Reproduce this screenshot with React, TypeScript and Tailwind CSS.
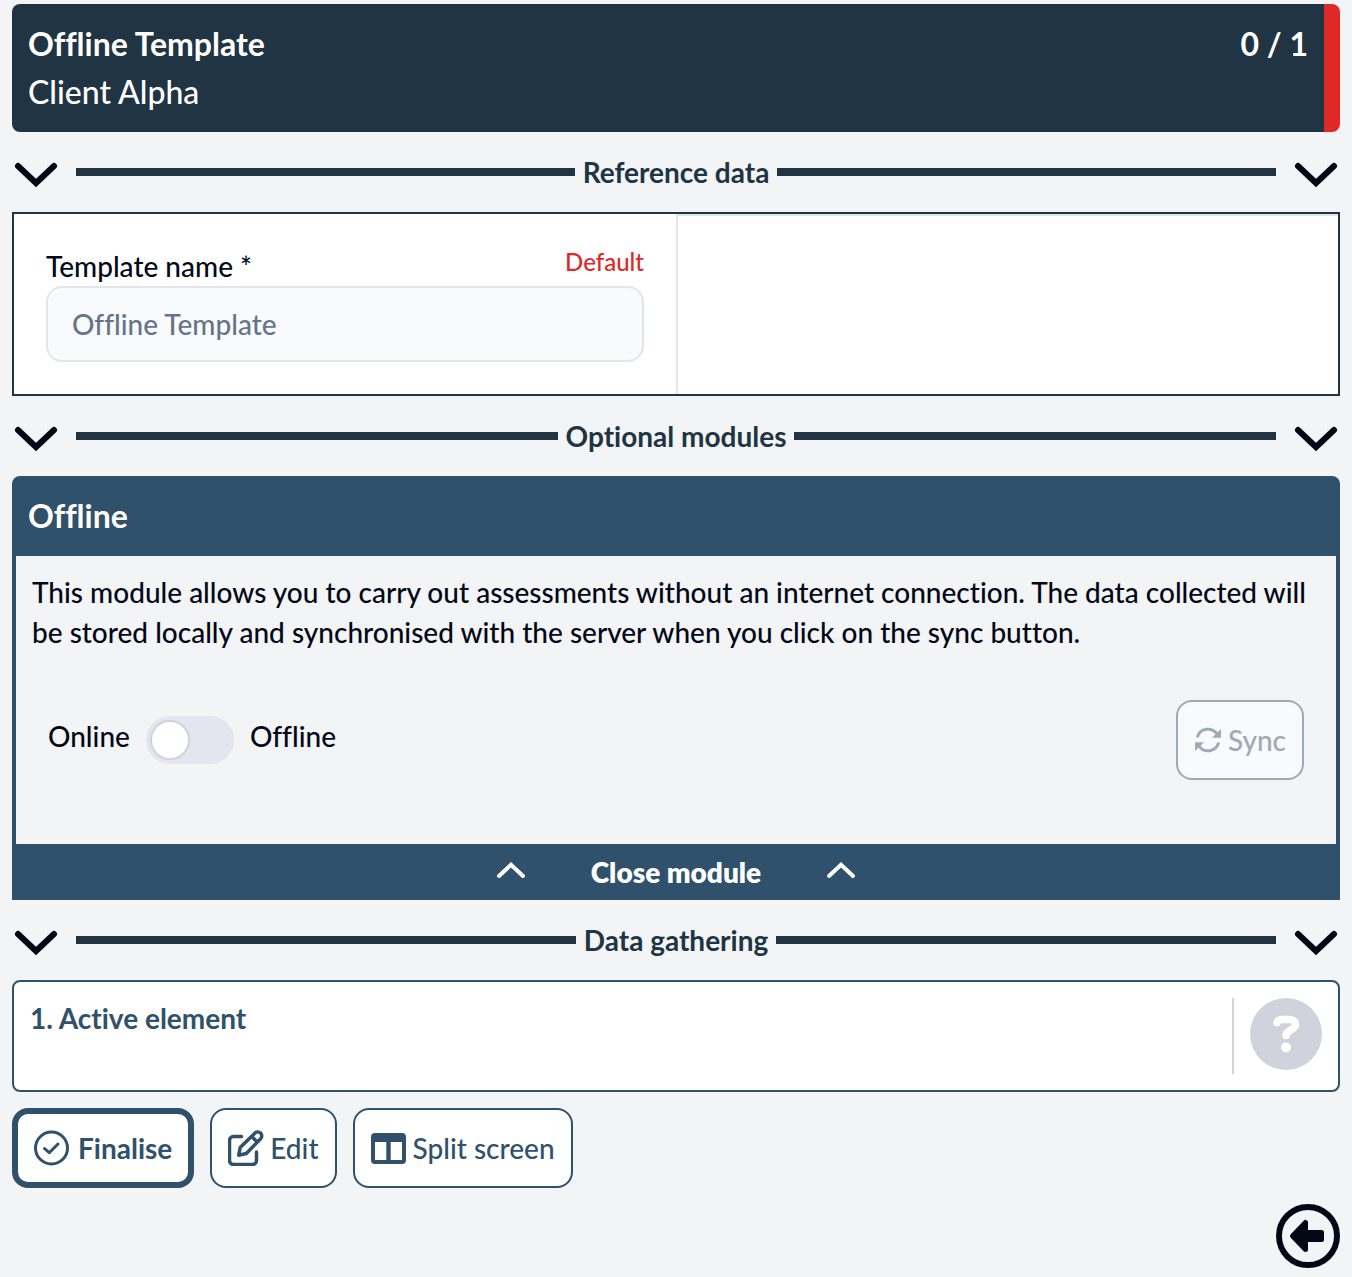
import { useState, type ReactNode } from 'react';

function ChevronDown() {
  return (
    <svg viewBox="0 0 48 48" className="size-12" fill="none" stroke="currentColor" strokeWidth="6" strokeLinecap="round" aria-hidden="true">
      <path d="M6 18 24 35 42 18" />
    </svg>
  );
}

function ChevronUp() {
  return (
    <svg viewBox="0 0 32 32" className="size-8" fill="none" stroke="currentColor" strokeWidth="4" strokeLinecap="round" aria-hidden="true">
      <path d="M4 20 16 8.800 28 20" />
    </svg>
  );
}

function SyncIcon() {
  return (
    <svg viewBox="0 0 28 28" className="size-7" fill="none" stroke="currentColor" strokeWidth="3" aria-hidden="true">
      <path d="M3.300 11.300A11 11 0 0 1 23 8M24.700 16.700A11 11 0 0 1 5 20" />
      <path d="M27 3v8.700h-9zM1 25v-8.700h9z" fill="currentColor" stroke="none" />
    </svg>
  );
}

function CheckCircleIcon() {
  return (
    <svg viewBox="0 0 36 36" className="size-9" fill="none" stroke="currentColor" strokeWidth="3" strokeLinecap="round" strokeLinejoin="round" aria-hidden="true">
      <circle cx="17.500" cy="18" r="16" />
      <path d="m10.500 18.500 4.700 4.200 8.800-8.700" />
    </svg>
  );
}

function EditIcon() {
  return (
    <svg viewBox="0 0 36 36" className="size-9" fill="none" stroke="currentColor" strokeWidth="3.500" strokeLinecap="round" strokeLinejoin="round" aria-hidden="true">
      <path d="M13.500 6.500H5.500a4 4 0 0 0-4 4v20a4 4 0 0 0 4 4h19a4 4 0 0 0 4-4v-8.500" />
      <path d="M10.700 25.200l1.500-7.700L26.800 3.200a4 4 0 0 1 5.800 5.600L18.300 23.500z" />
      <path d="m24 6.800 5 5" />
    </svg>
  );
}

function SplitIcon() {
  return (
    <svg viewBox="0 0 36 36" className="size-9" fill="currentColor" aria-hidden="true">
      <path fillRule="evenodd" d="M4 3h27a4 4 0 0 1 4 4v23a4 4 0 0 1-4 4H4a4 4 0 0 1-4-4V7a4 4 0 0 1 4-4zM4 12v18h11.300V12zM19.700 12v18H31V12z" />
    </svg>
  );
}

function HelpIcon() {
  return (
    <svg viewBox="0 0 72 72" className="size-18" fill="none" aria-hidden="true">
      <circle cx="36" cy="36" r="36" fill="#d0d3db" />
      <path d="M27 24.500c.8-2 2.500-3 5-3h7c4 0 6.500 2 6.500 5 0 5.500-9.500 5.500-9.500 11" stroke="#fff" strokeWidth="7.500" strokeLinecap="round" />
      <circle cx="36" cy="49.500" r="5" fill="#fff" />
    </svg>
  );
}

function BackIcon() {
  return (
    <svg viewBox="0 0 64 64" className="size-16" fill="none" stroke="currentColor" aria-hidden="true">
      <circle cx="32" cy="32" r="29" strokeWidth="6" />
      <path d="M16.500 32 29.500 18.500V28.500H45.500V35.500H29.500V45.500z" fill="currentColor" strokeWidth="5" strokeLinejoin="round" />
    </svg>
  );
}

function SectionHeading({ children }: { children: ReactNode }) {
  return (
    <div className="my-4 flex items-center gap-4">
      <button type="button" aria-label={`Toggle ${children}`}><ChevronDown /></button>
      <div className="flex flex-1 items-center gap-2 text-[#203444]">
        <span className="h-2 flex-1 bg-[#203444]" />
        <h2 className="font-bold">{children}</h2>
        <span className="h-2 flex-1 bg-[#203444]" />
      </div>
      <button type="button" aria-label={`Toggle ${children}`}><ChevronDown /></button>
    </div>
  );
}

export default function App() {
  const [offline, setOffline] = useState(false);

  return (
    <div className="min-h-screen bg-[#f3f4f6] px-3 pt-1 pb-2 font-['Lato',sans-serif] text-[28px] leading-10 font-medium text-[#030817] [font-variant-ligatures:no-common-ligatures]">
      <header className="flex justify-between rounded-lg border-r-16 border-[#e02827] bg-[#203444] p-4 text-[32px] leading-12 text-white">
        <div>
          <h1 className="font-bold">Offline Template</h1>
          <p>Client Alpha</p>
        </div>
        <p className="font-bold">0 / 1</p>
      </header>

      <SectionHeading>Reference data</SectionHeading>

      <section className="grid grid-cols-2 border-2 border-[#203444] bg-white">
        <div className="p-8">
          <div className="flex items-start justify-between">
            <label htmlFor="template-name">Template name *</label>
            <span className="text-2xl leading-8 text-[#e02827]">Default</span>
          </div>
          <input
            id="template-name"
            className="block h-19 w-full rounded-2xl border-2 border-[#e2e5ec] bg-[#f9fafb] px-6 text-[#65748a]"
            value="Offline Template"
            readOnly
          />
        </div>
        <div className="border-t-2 border-l-2 border-[#e2e5ec]" />
      </section>

      <SectionHeading>Optional modules</SectionHeading>

      <section className="overflow-hidden rounded-t-lg bg-[#30516b]">
        <h3 className="p-4 text-[32px] leading-12 font-bold text-white">Offline</h3>
        <div className="mx-1 bg-[#f3f4f6] p-4 pb-16">
          <p>
            This module allows you to carry out assessments without an internet connection. The data collected will be
            stored locally and synchronised with the server when you click on the sync button.
          </p>
          <div className="mt-12 flex items-center justify-between px-4">
            <label className="flex items-start gap-4">
              <span>Online</span>
              <input
                type="checkbox"
                role="switch"
                checked={offline}
                onChange={(e) => setOffline(e.target.checked)}
                className="flex h-12 w-22 appearance-none items-center rounded-full bg-[#e3e6ee] p-1 before:size-10 before:rounded-full before:border-2 before:border-[#d0d3db] before:bg-white checked:justify-end checked:bg-[#30516b]"
              />
              <span>Offline</span>
            </label>
            <button type="button" disabled className="flex h-20 items-center gap-1.5 rounded-2xl border-2 border-[#a0a9b5] bg-[#f9fafb] px-4 text-[#a0a9b5]">
              <SyncIcon />
              Sync
            </button>
          </div>
        </div>
        <button type="button" className="flex w-full items-center justify-center gap-16 py-2 font-extrabold text-white">
          <ChevronUp />
          Close module
          <ChevronUp />
        </button>
      </section>

      <SectionHeading>Data gathering</SectionHeading>

      <section className="flex justify-between rounded-lg border-2 border-[#30516b] bg-white p-4 text-[#30516b]">
        <h3 className="font-bold">1. Active element</h3>
        <div className="flex h-19 items-start border-l-2 border-[#d0d3db] pl-4">
          <button type="button" aria-label="Help"><HelpIcon /></button>
        </div>
      </section>

      <div className="my-4 flex gap-4 text-[#30516b]">
        <button type="button" className="flex h-20 items-center gap-2 rounded-2xl border-6 border-[#30516b] bg-white px-4 font-bold">
          <CheckCircleIcon />
          Finalise
        </button>
        <button type="button" className="flex h-20 items-center gap-1.5 rounded-2xl border-2 border-[#30516b] bg-white px-4">
          <EditIcon />
          Edit
        </button>
        <button type="button" className="flex h-20 items-center gap-1.5 rounded-2xl border-2 border-[#30516b] bg-white px-4">
          <SplitIcon />
          Split screen
        </button>
      </div>

      <footer className="flex justify-end">
        <button type="button" aria-label="Back"><BackIcon /></button>
      </footer>
    </div>
  );
}
